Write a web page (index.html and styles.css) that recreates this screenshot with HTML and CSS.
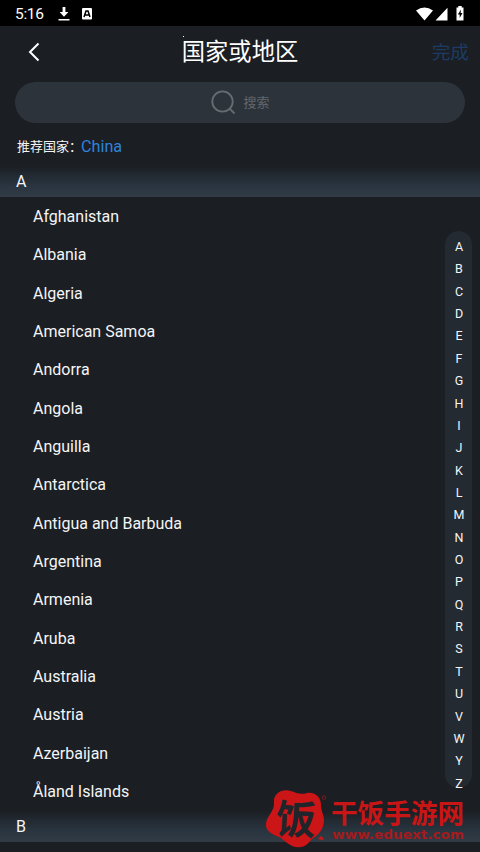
FILE: index.html
```html
<!DOCTYPE html>
<html lang="zh-CN">
<head>
<meta charset="utf-8">
<title>国家或地区</title>
<link rel="stylesheet" href="styles.css">
</head>
<body>
<div class="screen">
  <div class="status">
    <span class="time">5:16</span>
    <svg class="download" width="12" height="14" viewBox="0 0 12 14"><path d="M4.600 0h2.800v5h3L6 9.800 1.600 5h3zM.5 12h11v1.600H.5z" fill="#fff"/></svg>
    <svg class="badge" width="10" height="12" viewBox="0 0 10 12"><rect width="10" height="11.500" rx="1" fill="#fff"/><path d="M2 9L4 3h2l2 6M3.300 7h3.400" fill="none" stroke="#000" stroke-width="1.500"/></svg>
    <svg class="signals" width="50" height="16" viewBox="0 0 50 16"><path d="M0 4.500Q8.500-1.500 17 4.500L8.500 14.500zM31.500 1.800V14.500H19.500zM40.500 1.500h1.800V0h3.400v1.500h1.800v13h-7z" fill="#fff"/><path d="M45 3.500l-3.200 5h1.900v3.600l2.800-5h-1.900z" fill="#000"/></svg>
  </div>
  <header class="nav">
    <svg class="back" width="12" height="20" viewBox="0 0 12 20"><path d="M10.500 1.500L2 10l8.500 8.500" fill="none" stroke="#fff" stroke-width="2"/></svg>
    <h1>国家或地区</h1>
    <span class="done">完成</span>
  </header>
  <div class="search">
    <svg width="25" height="25" viewBox="0 0 25 25"><g fill="none" stroke="#686c70" stroke-width="1.800"><circle cx="11.500" cy="11.500" r="10.200"/><path d="M18.500 18.500l5 5"/></g></svg>
    <span>搜索</span>
  </div>
  <div class="suggest"><span>推荐国家：</span><b>China</b></div>
  <div class="letter">A</div>
  <ul class="list">
    <li>Afghanistan</li><li>Albania</li><li>Algeria</li><li>American Samoa</li>
    <li>Andorra</li><li>Angola</li><li>Anguilla</li><li>Antarctica</li>
    <li>Antigua and Barbuda</li><li>Argentina</li><li>Armenia</li><li>Aruba</li>
    <li>Australia</li><li>Austria</li><li>Azerbaijan</li><li>Åland Islands</li>
  </ul>
  <div class="letter">B</div>
  <div class="index">
    <i>A</i><i>B</i><i>C</i><i>D</i><i>E</i><i>F</i><i>G</i><i>H</i><i>I</i><i>J</i><i>K</i><i>L</i><i>M</i><i>N</i><i>O</i><i>P</i><i>Q</i><i>R</i><i>S</i><i>T</i><i>U</i><i>V</i><i>W</i><i>Y</i><i>Z</i>
  </div>
  <svg class="dot" width="2" height="2"><rect width="1" height="1" fill="#fff"/></svg>
  <svg class="watermark" width="214" height="62" viewBox="0 0 214 62">
    <path d="M8 12C7 3 17-2 25 1c6 2 9 4 16 2 8-1 14 4 14 12 0 6 3 10 3 15 0 8-5 15-11 18-4 3-5 8-12 9-8 2-15-5-20-9C9 45 1 43 0 36-1 27 9 22 8 12z" fill="#cb1517"/>
    <text class="mark" x="10" y="44" transform="rotate(3 30 30)">饭</text>
    <path d="M52 49l3-3 3 3-2 1z" fill="#cb1517"/>
    <circle cx="58" cy="7.500" r="1.800" fill="none" stroke="#7d1a1b"/>
    <text class="name" x="65" y="32.500" textLength="133">干饭手游网</text>
    <text class="url" x="66" y="49" textLength="132" lengthAdjust="spacingAndGlyphs">www.eduext.com</text>
  </svg>
</div>
</body>
</html>
```
FILE: styles.css
```css
* { box-sizing: border-box; }
body { margin: 0; background: #1b1e23; }
.screen {
  position: relative;
  width: 480px;
  height: 852px;
  overflow: hidden;
  background: #1b1e23;
  color: #f4f5f6;
  font-family: Roboto, "Noto Sans CJK SC", sans-serif;
}
.status {
  display: flex;
  align-items: center;
  height: 26px;
  padding: 1px 15px 0;
  background: #000;
}
.time { width: 43px; font-size: 15.500px; letter-spacing: -.3px; color: #fff; }
.badge { margin-left: 12px; }
.signals { margin-left: auto; margin-right: -1px; }
.nav {
  display: grid;
  grid-template-columns: 100px 1fr 100px;
  align-items: center;
  height: 56px;
  padding: 0 12px 5px 28px;
}
.nav h1 {
  margin: 0;
  padding: 1px 16px 0 0;
  font-size: 23.300px;
  line-height: 34px;
  font-weight: 400;
  text-align: center;
  color: #fff;
}
.done { padding-bottom: 2px; margin-right: -1px; font-size: 18.700px; text-align: right; color: #1c3c63; }
.search {
  display: flex;
  align-items: center;
  justify-content: center;
  gap: 7px;
  height: 41px;
  margin: 0 15px;
  padding-left: 1px;
  border-radius: 21px;
  background: #2c333b;
  font-size: 13px;
  color: #62676d;
}
.search span { padding-bottom: 2px; }
.suggest {
  display: flex;
  align-items: center;
  height: 43px;
  padding: 4px 17px 0;
  font-size: 13px;
}
.suggest span { width: 64px; padding-bottom: 2px; white-space: nowrap; }
.suggest b { font-size: 16.200px; font-weight: 400; color: #2d83dc; }
.letter {
  height: 31px;
  padding-left: 16px;
  font-size: 16px;
  line-height: 31px;
  background: linear-gradient(#1b1e23 0%, #222a32 30%, #293540 65%, #323b46 100%);
}
.list { height: 614px; margin: 0; padding: 1px 0 0 33px; list-style: none; }
.list li { height: 38.340px; font-size: 16px; line-height: 38.340px; }
.index {
  position: absolute;
  left: 445px;
  top: 231px;
  display: flex;
  flex-direction: column;
  width: 27px;
  height: 557px;
  padding: 5px 0 0 1px;
  border-radius: 14px;
  background: #232a32;
  text-align: center;
}
.index i { flex: none; height: 22.370px; font-size: 12.500px; line-height: 22.370px; font-style: normal; }
.dot { position: absolute; left: 183px; top: 36px; }
.watermark { position: absolute; left: 266px; top: 790px; overflow: visible; }
.mark { font: 700 40px "Noto Sans CJK SC", sans-serif; fill: #20252b; }
.name { font: 700 26.600px "Noto Sans CJK SC", sans-serif; fill: #c81516; }
.url { font: 700 12px "DejaVu Sans", sans-serif; fill: #a51a1c; }
```
